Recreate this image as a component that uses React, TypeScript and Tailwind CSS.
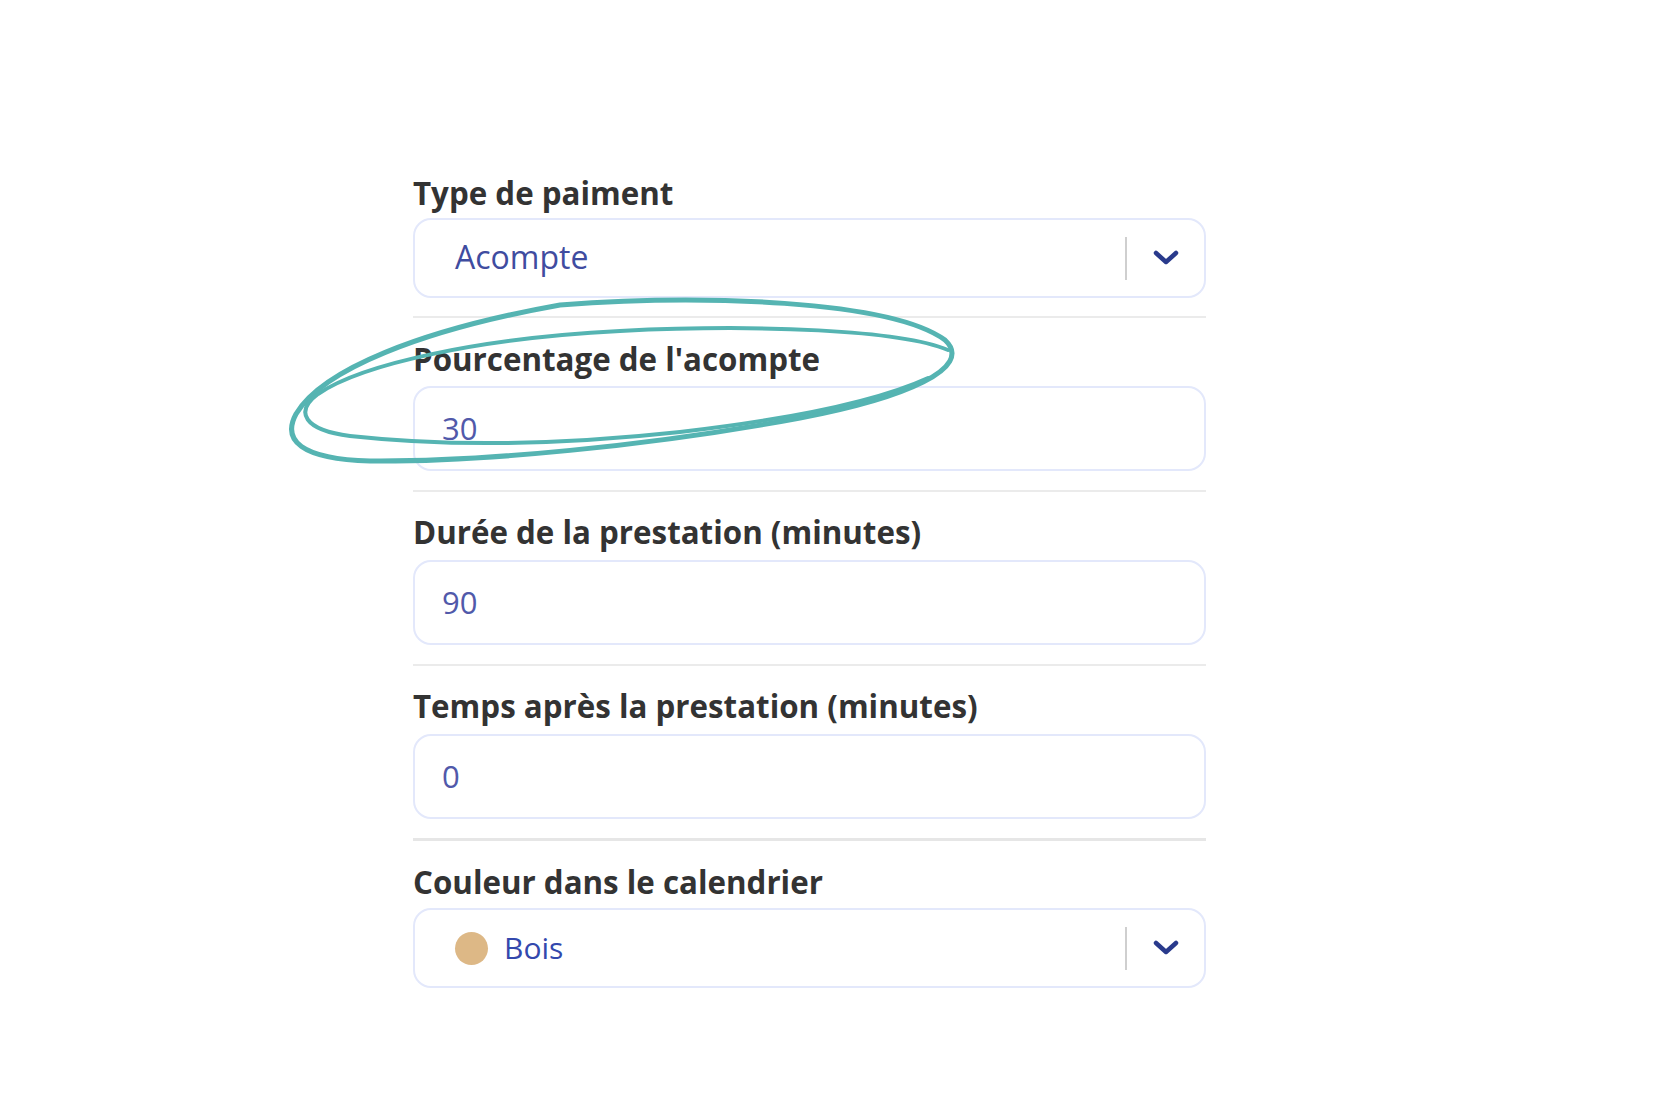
export default function App() {
  return (
    <div className="relative min-h-[1111px] w-full bg-white font-['Open_Sans',sans-serif]">
      <div className="w-[793px] pl-0 ml-[413px] pt-[173px]">
        {/* Type de paiment */}
        <Label text="Type de paiment" />
        <SelectBox className="mt-[5px]">
          <span className="text-[32px] leading-none text-[#3f4ca0]">Acompte</span>
        </SelectBox>
        <Divider className="mt-[18px]" />

        {/* Pourcentage */}
        <div className="mt-[21px]">
          <Label text="Pourcentage de l'acompte" />
        </div>
        <InputBox value="30" className="mt-[7px]" />
        <Divider className="mt-[19px]" />

        <div className="mt-[20px]">
          <Label text="Durée de la prestation (minutes)" />
        </div>
        <InputBox value="90" className="mt-[8px]" />
        <Divider className="mt-[19px]" />

        <div className="mt-[20px]">
          <Label text="Temps après la prestation (minutes)" />
        </div>
        <InputBox value="0" className="mt-[8px]" />
        <div className="mt-[19px] h-[3px] bg-[#e6e6e6]" />

        {/* Couleur */}
        <div className="mt-[21px]">
          <Label text="Couleur dans le calendrier" />
        </div>
        <SelectBox className="mt-[6px]">
          <div className="flex items-center gap-[16px]">
            <span className="block h-[33px] w-[33px] rounded-full bg-[#ddb886]" />
            <span className="text-[30px] leading-none text-[#3348ad]">Bois</span>
          </div>
        </SelectBox>
      </div>

      {/* hand-drawn highlight */}
      <svg
        className="pointer-events-none absolute left-0 top-0"
        width="1666"
        height="1111"
        viewBox="0 0 1666 1111"
        fill="none"
      >
        <path
          d="M560 305 C700 294, 890 300, 945 340 C975 368, 905 398, 800 418 C650 446, 480 462, 370 461 C300 459, 282 440, 296 414 C322 370, 420 330, 560 305"
          stroke="#55b4b2"
          strokeWidth="5"
          strokeLinecap="round"
        />
        <path
          d="M948 350 C900 330, 760 324, 620 331 C480 338, 362 364, 318 394 C294 412, 304 430, 350 436 C450 447, 560 445, 680 432 C800 418, 880 400, 928 378"
          stroke="#55b4b2"
          strokeWidth="4"
          strokeLinecap="round"
        />
      </svg>
    </div>
  );
}

function Label({ text }: { text: string }) {
  return (
    <div className="h-[40px] text-[31.3px] font-bold leading-[40px] text-[#333333] whitespace-nowrap">
      {text}
    </div>
  );
}

function Divider({ className = "" }: { className?: string }) {
  return <div className={`h-[2px] bg-[#ebebeb] ${className}`} />;
}

function InputBox({ value, className = "" }: { value: string; className?: string }) {
  return (
    <div
      className={`flex h-[85px] items-center rounded-[18px] border-2 border-[#e3e8fb] pl-[27px] ${className}`}
    >
      <span className="text-[31px] leading-none text-[#5159aa]">{value}</span>
    </div>
  );
}

function SelectBox({
  children,
  className = "",
}: {
  children: React.ReactNode;
  className?: string;
}) {
  return (
    <div
      className={`flex h-[80px] items-center rounded-[18px] border-2 border-[#e3e8fb] pl-[40px] pr-[25px] ${className}`}
    >
      <div className="flex-1">{children}</div>
      <div className="h-[43px] w-[2px] bg-[#cfcfcf]" />
      <div className="ml-[26px] flex h-[20px] w-[26px] items-center justify-center">
        <svg width="26" height="16" viewBox="0 0 26 16" fill="none">
          <polyline
            points="3,3 13,12 23,3"
            stroke="#293a8c"
            strokeWidth="4.5"
            strokeLinecap="round"
            strokeLinejoin="round"
          />
        </svg>
      </div>
    </div>
  );
}
